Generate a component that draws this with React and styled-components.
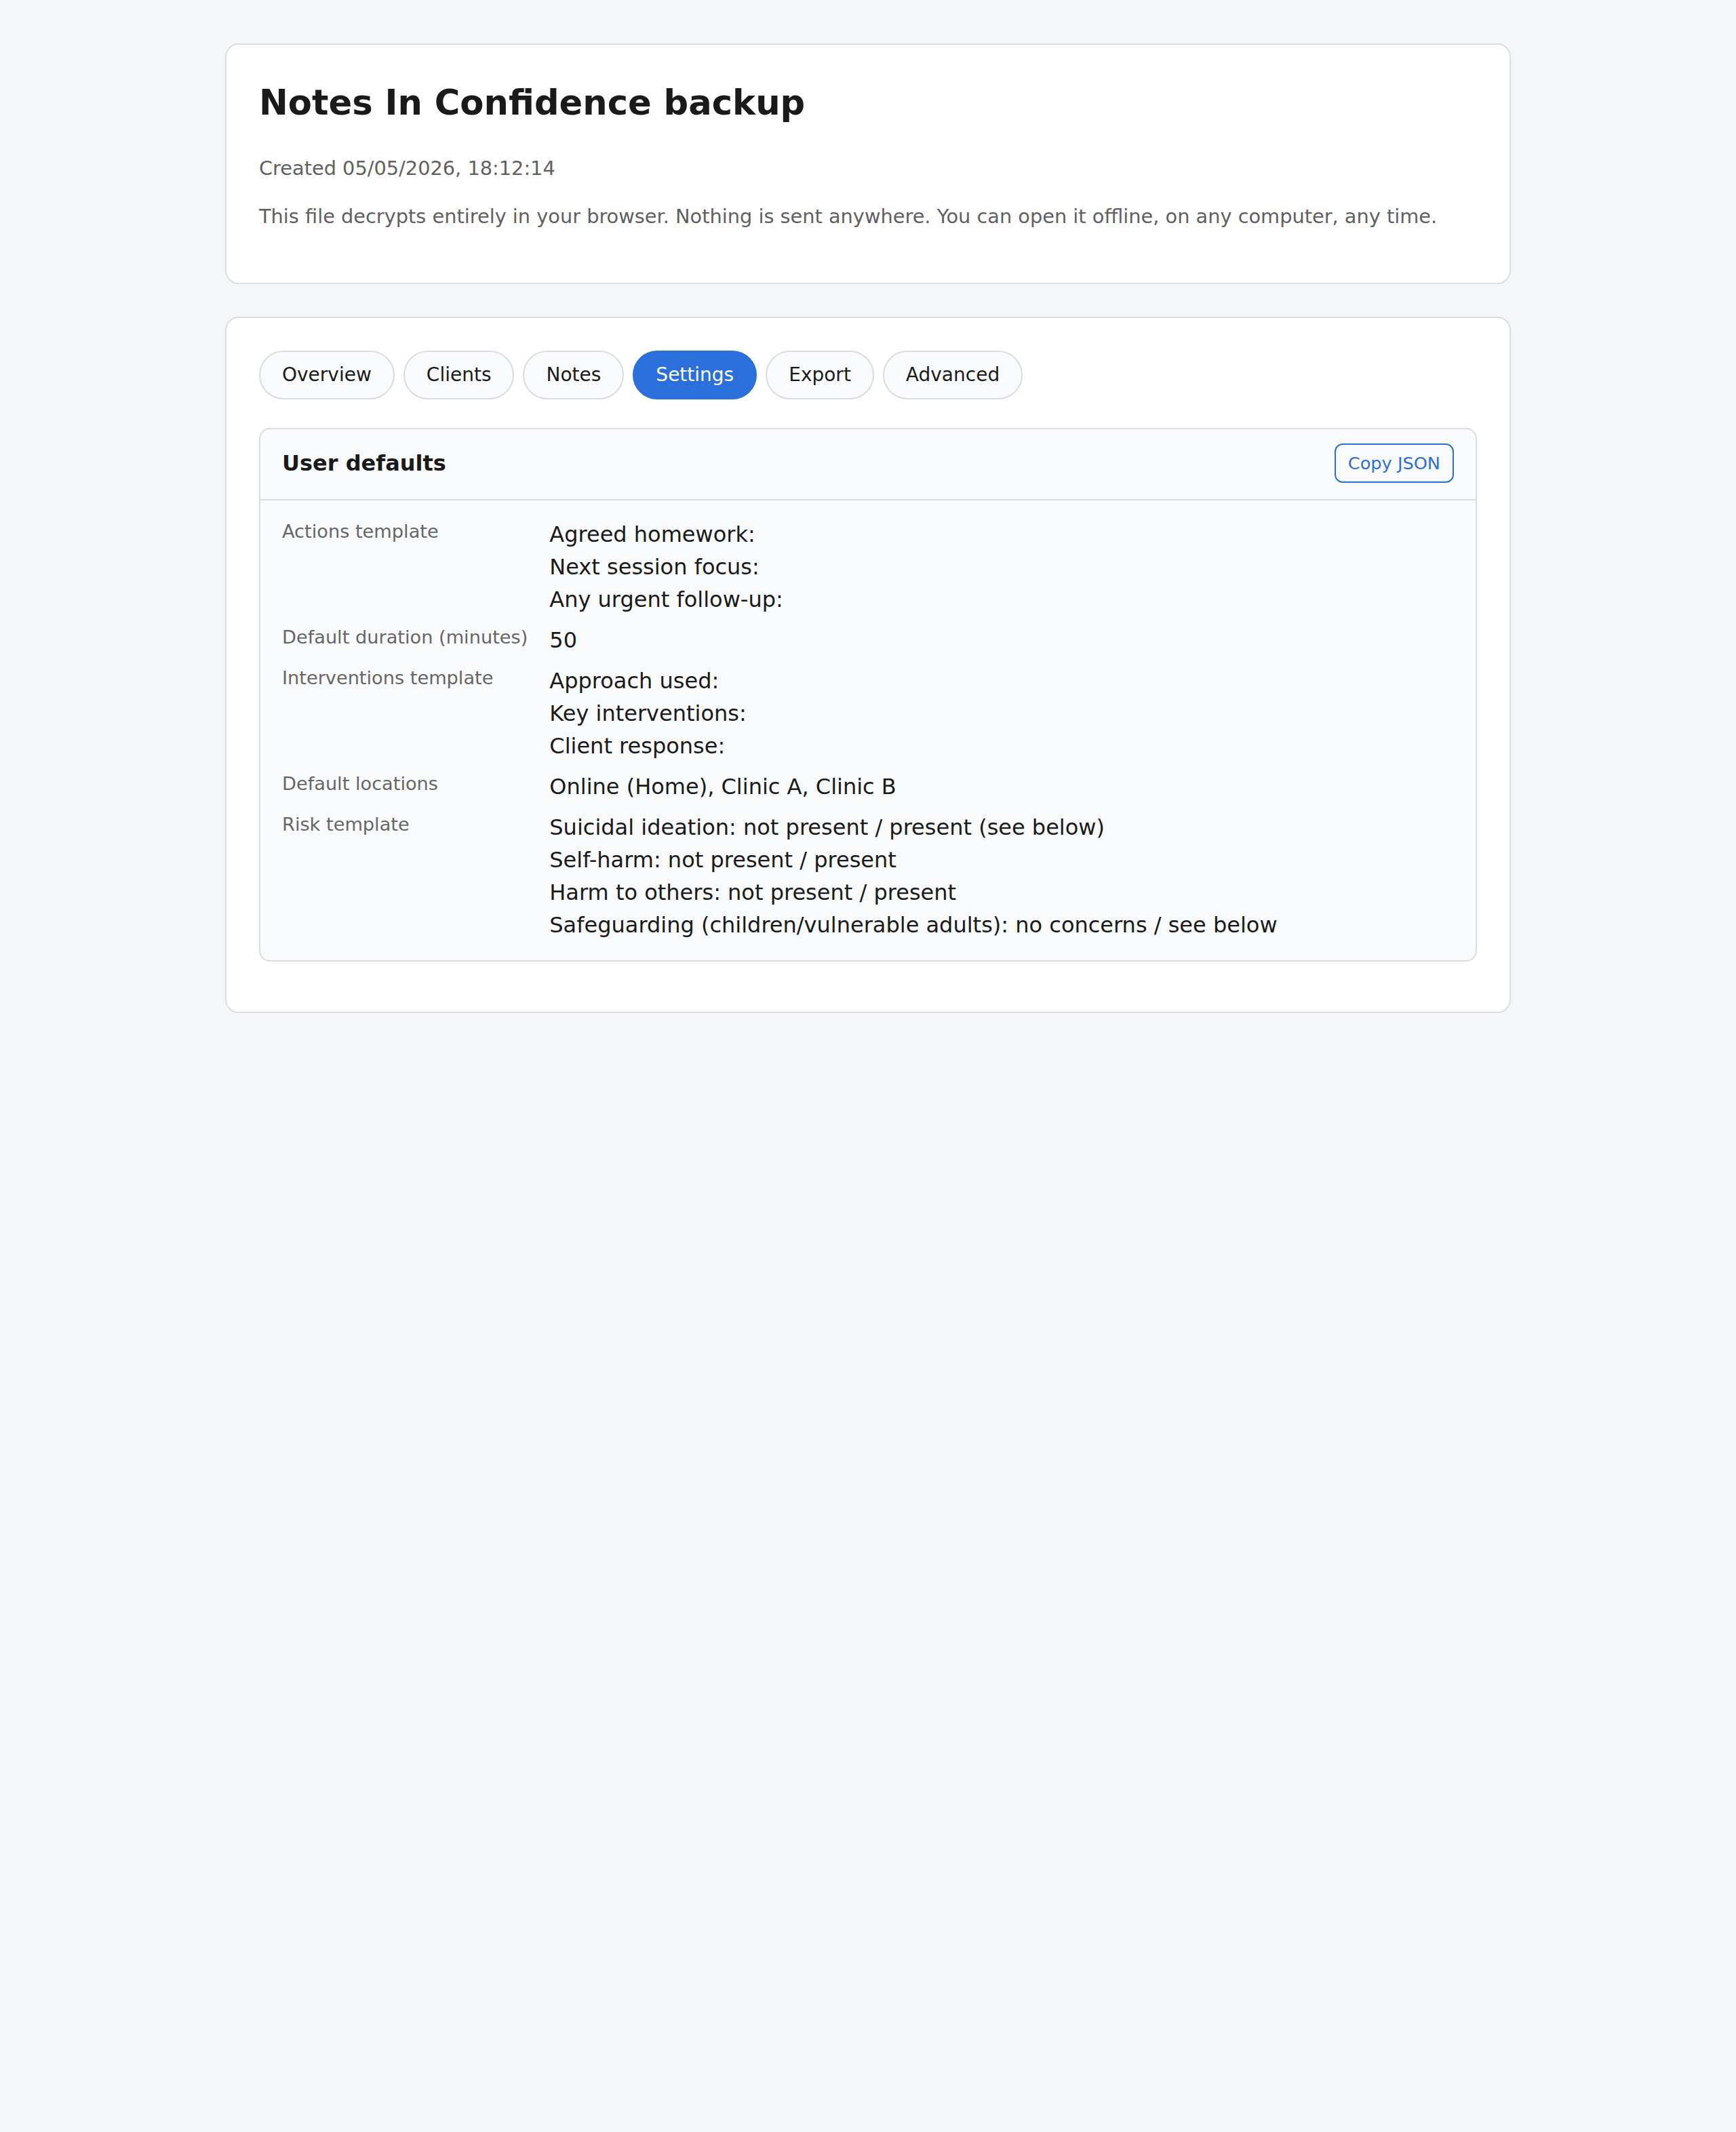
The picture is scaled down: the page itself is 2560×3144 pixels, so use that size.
import styled, { createGlobalStyle } from 'styled-components'

const GlobalStyle = createGlobalStyle`
    html, body {
        margin: 0;
        padding: 0;
        background: #f5f6f8;
        font-family: "DejaVu Sans", "Liberation Sans", sans-serif;
        color: #1a1a1a;
    }
`

const TABS = ['Overview', 'Clients', 'Notes', 'Settings', 'Export', 'Advanced']

const USER_DEFAULTS = [
    { label: 'Actions template', value: 'Agreed homework:\nNext session focus:\nAny urgent follow-up:' },
    { label: 'Default duration (minutes)', value: '50' },
    { label: 'Interventions template', value: 'Approach used:\nKey interventions:\nClient response:' },
    { label: 'Default locations', value: 'Online (Home), Clinic A, Clinic B' },
    {
        label: 'Risk template',
        value: 'Suicidal ideation: not present / present (see below)\nSelf-harm: not present / present\nHarm to others: not present / present\nSafeguarding (children/vulnerable adults): no concerns / see below',
    },
]

const Page = styled.main`
    width: 1896px;
    margin: 0 auto;
    padding: 64px 0;
    display: flex;
    flex-direction: column;
    gap: 48px;
`

const Card = styled.section`
    background: #ffffff;
    border: 2px solid #dadde3;
    border-radius: 20px;
    padding: 48px;
`

const Title = styled.h1`
    margin: 0 0 39px;
    font-size: 51.2px;
    line-height: 1.45;
    font-weight: 700;
    color: #1a1a1a;
`

const Note = styled.p`
    margin: 0 0 ${p => p.$gap}px;
    font-size: 28.8px;
    line-height: 1.5;
    color: #606060;
`

const TabBar = styled.nav`
    display: flex;
    gap: 13px;
    margin-bottom: 42px;
`

const Tab = styled.button`
    height: 72px;
    padding: 0 32px;
    border-radius: 999px;
    border: 2px solid ${p => (p.$active ? '#2b6fdc' : '#d9dce3')};
    background: ${p => (p.$active ? '#2b6fdc' : '#f9fafc')};
    color: ${p => (p.$active ? '#ffffff' : '#1a1a1a')};
    font-family: inherit;
    font-size: 28px;
    line-height: 36px;
    cursor: pointer;
`

const Panel = styled.div`
    background: #f9fafc;
    border: 2px solid #d9dce3;
    border-radius: 16px;
    margin-bottom: 26px;
`

const PanelHeader = styled.header`
    padding: 21px 32px 24px;
    display: flex;
    align-items: center;
    justify-content: space-between;
    border-bottom: 2px solid #d9dce3;
`

const PanelTitle = styled.h3`
    margin: 0;
    font-size: 32px;
    line-height: 48px;
    font-weight: 700;
`

const GhostButton = styled.button`
    height: 58px;
    padding: 0 18px;
    border: 2px solid #2b6fdc;
    border-radius: 12px;
    background: transparent;
    color: #2b6fdc;
    font-family: inherit;
    font-size: 25.6px;
    cursor: pointer;
`

const FieldGrid = styled.dl`
    margin: 0;
    padding: 26px 32px 28px;
    display: grid;
    grid-template-columns: max-content 1fr;
    column-gap: 32px;
    row-gap: 12px;
`

const FieldLabel = styled.dt`
    font-size: 27.2px;
    line-height: 1.5;
    color: #666666;
`

const FieldValue = styled.dd`
    margin: 0;
    font-size: 32px;
    line-height: 48px;
    color: #1a1a1a;
    white-space: pre-line;
`

export default function App() {
    return (
        <>
            <GlobalStyle />
            <Page>
                <Card>
                    <Title>Notes In Confidence backup</Title>
                    <Note $gap={28}>Created 05/05/2026, 18:12:14</Note>
                    <Note $gap={27}>
                        This file decrypts entirely in your browser. Nothing is sent anywhere. You can open it offline, on any computer, any time.
                    </Note>
                </Card>

                <Card>
                    <TabBar>
                        {TABS.map(tab => (
                            <Tab key={tab} $active={tab === 'Settings'}>{tab}</Tab>
                        ))}
                    </TabBar>

                    <Panel>
                        <PanelHeader>
                            <PanelTitle>User defaults</PanelTitle>
                            <GhostButton>Copy JSON</GhostButton>
                        </PanelHeader>
                        <FieldGrid>
                            {USER_DEFAULTS.map(field => [
                                <FieldLabel key={field.label + '-l'}>{field.label}</FieldLabel>,
                                <FieldValue key={field.label + '-v'}>{field.value}</FieldValue>,
                            ])}
                        </FieldGrid>
                    </Panel>
                </Card>
            </Page>
        </>
    )
}
